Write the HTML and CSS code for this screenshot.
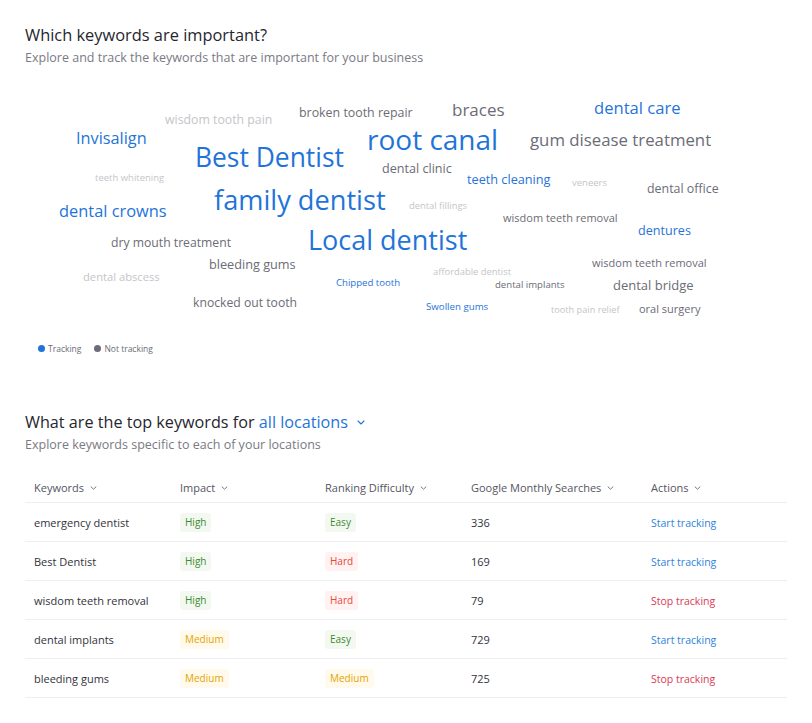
FILE: index.html
```html
<!DOCTYPE html>
<html>
<head>
<meta charset="utf-8">
<link rel="stylesheet" href="styles.css">
</head>
<body>
<div class="page">
  <section class="intro">
    <h1 class="title">Which keywords are important?</h1>
    <p class="subtitle">Explore and track the keywords that are important for your business</p>
  </section>

  <div class="cloud">
    <span class="w light" style="left:140px;top:28px;font-size:12.3px">wisdom tooth pain</span>
    <span class="w gray" style="left:274px;top:21px;font-size:12.4px">broken tooth repair</span>
    <span class="w gray" style="left:427px;top:15px;font-size:17px">braces</span>
    <span class="w blue" style="left:569px;top:14px;font-size:16.6px">dental care</span>
    <span class="w blue" style="left:51px;top:44px;font-size:16.3px">Invisalign</span>
    <span class="w blue" style="left:342px;top:39px;font-size:28px">root canal</span>
    <span class="w gray" style="left:505px;top:46px;font-size:16.8px">gum disease treatment</span>
    <span class="w blue" style="left:170px;top:58px;font-size:26.4px">Best Dentist</span>
    <span class="w gray" style="left:357px;top:77px;font-size:12.6px">dental clinic</span>
    <span class="w light" style="left:70px;top:87px;font-size:9.5px">teeth whitening</span>
    <span class="w blue" style="left:442px;top:87px;font-size:12.7px">teeth cleaning</span>
    <span class="w light" style="left:547px;top:92px;font-size:9.5px">veneers</span>
    <span class="w gray" style="left:622px;top:97px;font-size:12.4px">dental office</span>
    <span class="w blue" style="left:189px;top:100px;font-size:27.2px">family dentist</span>
    <span class="w light" style="left:384px;top:115px;font-size:9.4px">dental fillings</span>
    <span class="w blue" style="left:34px;top:117px;font-size:16.4px">dental crowns</span>
    <span class="w gray" style="left:478px;top:126px;font-size:11px">wisdom teeth removal</span>
    <span class="w blue" style="left:613px;top:139px;font-size:12.6px">dentures</span>
    <span class="w gray" style="left:86px;top:151px;font-size:12.2px">dry mouth treatment</span>
    <span class="w blue" style="left:283px;top:140px;font-size:27px">Local dentist</span>
    <span class="w gray" style="left:184px;top:172px;font-size:12.7px">bleeding gums</span>
    <span class="w gray" style="left:567px;top:171px;font-size:11px">wisdom teeth removal</span>
    <span class="w light" style="left:408px;top:181px;font-size:9.4px">affordable dentist</span>
    <span class="w light" style="left:58px;top:185px;font-size:11.2px">dental abscess</span>
    <span class="w blue" style="left:311px;top:192px;font-size:9.6px">Chipped tooth</span>
    <span class="w gray" style="left:470px;top:194px;font-size:9.6px">dental implants</span>
    <span class="w gray" style="left:588px;top:193px;font-size:13px">dental bridge</span>
    <span class="w gray" style="left:168px;top:211px;font-size:12.2px">knocked out tooth</span>
    <span class="w blue" style="left:401px;top:216px;font-size:9.7px">Swollen gums</span>
    <span class="w light" style="left:526px;top:219px;font-size:9.2px">tooth pain relief</span>
    <span class="w gray" style="left:614px;top:217px;font-size:11px">oral surgery</span>
  </div>

  <div class="legend">
    <span class="legend-item"><span class="dot dot-blue"></span>Tracking</span>
    <span class="legend-item"><span class="dot dot-gray"></span>Not tracking</span>
  </div>

  <section class="intro intro-second">
    <h2 class="title title-second">What are the top keywords for <span class="loc">all locations</span>
      <svg class="chev-title" width="8" height="5" viewBox="0 0 8 5"><path d="M1 1l3 3 3-3" fill="none" stroke="#1f74d9" stroke-width="1.1" stroke-linecap="round" stroke-linejoin="round"/></svg>
    </h2>
    <p class="subtitle">Explore keywords specific to each of your locations</p>
  </section>

  <div class="table">
    <div class="row head">
      <div class="cell">Keywords <svg class="chev" width="7" height="4" viewBox="0 0 7 4"><path d="M1 .8l2.5 2.4L6 .8" fill="none" stroke="#777" stroke-width="1" stroke-linecap="round"/></svg></div>
      <div class="cell">Impact <svg class="chev" width="7" height="4" viewBox="0 0 7 4"><path d="M1 .8l2.5 2.4L6 .8" fill="none" stroke="#777" stroke-width="1" stroke-linecap="round"/></svg></div>
      <div class="cell">Ranking Difficulty <svg class="chev" width="7" height="4" viewBox="0 0 7 4"><path d="M1 .8l2.5 2.4L6 .8" fill="none" stroke="#777" stroke-width="1" stroke-linecap="round"/></svg></div>
      <div class="cell">Google Monthly Searches <svg class="chev" width="7" height="4" viewBox="0 0 7 4"><path d="M1 .8l2.5 2.4L6 .8" fill="none" stroke="#777" stroke-width="1" stroke-linecap="round"/></svg></div>
      <div class="cell">Actions <svg class="chev" width="7" height="4" viewBox="0 0 7 4"><path d="M1 .8l2.5 2.4L6 .8" fill="none" stroke="#777" stroke-width="1" stroke-linecap="round"/></svg></div>
    </div>
    <div class="row">
      <div class="cell">emergency dentist</div>
      <div class="cell"><span class="badge green">High</span></div>
      <div class="cell"><span class="badge green">Easy</span></div>
      <div class="cell">336</div>
      <div class="cell"><span class="act start">Start tracking</span></div>
    </div>
    <div class="row">
      <div class="cell">Best Dentist</div>
      <div class="cell"><span class="badge green">High</span></div>
      <div class="cell"><span class="badge red">Hard</span></div>
      <div class="cell">169</div>
      <div class="cell"><span class="act start">Start tracking</span></div>
    </div>
    <div class="row">
      <div class="cell">wisdom teeth removal</div>
      <div class="cell"><span class="badge green">High</span></div>
      <div class="cell"><span class="badge red">Hard</span></div>
      <div class="cell">79</div>
      <div class="cell"><span class="act stop">Stop tracking</span></div>
    </div>
    <div class="row">
      <div class="cell">dental implants</div>
      <div class="cell"><span class="badge amber">Medium</span></div>
      <div class="cell"><span class="badge green">Easy</span></div>
      <div class="cell">729</div>
      <div class="cell"><span class="act start">Start tracking</span></div>
    </div>
    <div class="row">
      <div class="cell">bleeding gums</div>
      <div class="cell"><span class="badge amber">Medium</span></div>
      <div class="cell"><span class="badge amber">Medium</span></div>
      <div class="cell">725</div>
      <div class="cell"><span class="act stop">Stop tracking</span></div>
    </div>
  </div>
</div>
</body>
</html>
```

FILE: styles.css
```css
* { box-sizing: border-box; }
html, body { margin: 0; padding: 0; background: #ffffff; }
body {
  font-family: "Open Sans", "Noto Sans", "DejaVu Sans", sans-serif;
  color: #2b2b33;
}
.page {
  padding: 24px 25px 0 25px;
  width: 812px;
}
.intro { margin: 0; }
.title {
  margin: 0;
  font-size: 16.4px;
  font-weight: 400;
  line-height: 22px;
  color: #26262e;
}
.subtitle {
  margin: 3px 0 0 0;
  font-size: 12.5px;
  line-height: 18px;
  color: #7a7a84;
}
.cloud {
  position: relative;
  height: 255px;
  margin-top: 19px;
}
.w {
  position: absolute;
  white-space: nowrap;
  line-height: 1;
}
.w.blue { color: #1f74d9; }
.w.gray { color: #6c6c76; }
.w.light { color: #c5c5c8; }

.legend {
  display: flex;
  gap: 13px;
  padding-left: 13px;
  font-size: 8.5px;
  color: #6c6c76;
  margin-top: 2px;
}
.legend-item { display: inline-flex; align-items: center; gap: 3px; }
.dot { width: 7px; height: 7px; border-radius: 50%; display: inline-block; }
.dot-blue { background: #1f74d9; }
.dot-gray { background: #6c6c76; }

.intro-second { margin-top: 57px; }
.title-second { font-size: 16.2px; }
.loc { color: #1f74d9; }
.chev-title { margin-left: 5px; vertical-align: 3px; }

.table {
  margin-top: 19px;
  width: 762px;
  font-size: 11px;
}
.row {
  display: grid;
  grid-template-columns: 146px 145px 146px 180px 1fr;
  height: 39px;
  align-items: center;
  border-bottom: 1px solid #eeeef0;
}
.row.head {
  height: 30px;
  color: #55555f;
}
.cell {
  padding-left: 9px;
  color: #33333b;
  white-space: nowrap;
}
.head .cell { color: #55555f; }
.chev { margin-left: 3px; vertical-align: 2px; }
.badge {
  display: inline-block;
  padding: 0 5px;
  height: 19px;
  line-height: 19px;
  border-radius: 3px;
  font-size: 10px;
}
.badge.green { color: #3b8a2e; background: #f3f9f1; }
.badge.red { color: #e8473f; background: #fff2f1; }
.badge.amber { color: #e5a300; background: #fffaeb; }
.act { font-size: 10.5px; }
.act.start { color: #2e83dc; }
.act.stop { color: #d93a55; }
```
